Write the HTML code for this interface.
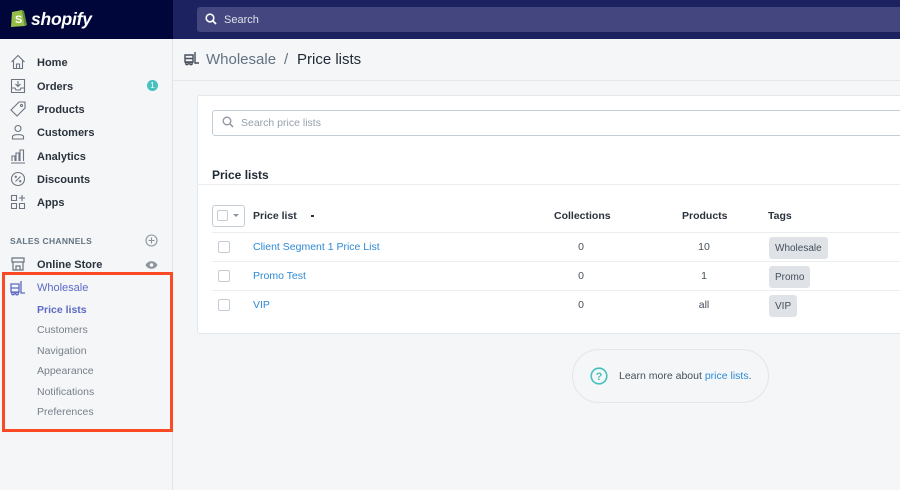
<!DOCTYPE html>
<html><head><meta charset="utf-8"><style>
*{box-sizing:border-box;margin:0;padding:0}
body{width:900px;height:490px;overflow:hidden;background:#f4f6f8;font-family:"Liberation Sans",sans-serif;position:relative;color:#212b36}
.top{position:absolute;left:0;top:0;width:900px;height:39px;background:#1c2260}
.logo{position:absolute;left:0;top:0;width:173px;height:39px;background:#000639}
.search{position:absolute;left:197px;top:7px;width:703px;height:25px;background:#43467f;border-radius:3px 0 0 3px;color:#dfe3e8;font-size:11px;line-height:26px;padding-left:27px}
.side{position:absolute;left:0;top:39px;width:173px;height:451px;border-right:1px solid #dfe3e8;background:#f4f6f8}
.nav{position:absolute;left:37px;font-size:11px;font-weight:bold;color:#2a333d}
.ic{position:absolute;left:10px;width:16px;height:16px}
.sub{position:absolute;left:37px;font-size:10.5px;color:#777f89}
.a{position:absolute}
.card{position:absolute;left:197px;top:95px;width:710px;height:239px;background:#fff;border:1px solid #e3e6ea;border-radius:3px}
.line{position:absolute;left:212px;width:688px;height:1px;background:#ebeef0}
.cb{position:absolute;left:218px;width:12px;height:12px;border:1px solid #c4cdd5;border-radius:2px;background:#fff}
.link{position:absolute;left:253px;font-size:10.5px;color:#2d8ad6}
.num{position:absolute;font-size:10.5px;color:#454f5b;text-align:center;width:40px}
.tag{position:absolute;left:769px;height:22px;background:#dfe3e8;border-radius:3px;font-size:10px;color:#454f5b;line-height:23px;padding:0 6px}
.th{position:absolute;top:210px;font-size:10.5px;font-weight:bold;color:#2a333d}
</style></head><body>
<div class="top"></div>
<div class="logo">
<svg class="a" style="left:10px;top:7px" width="17" height="21" viewBox="0 0 17 21"><path d="M2 5 L12 3 L15 19 L1 20 Z" fill="#95bf47"/><path d="M12 3 L15 19 L17 18 L14 4Z" fill="#5e8e3e"/><text x="5" y="16" font-size="11" font-weight="bold" fill="#fff" font-family="Liberation Sans">S</text></svg>
<div class="a" style="left:31px;top:9px;color:#fff;font-weight:bold;font-style:italic;font-size:17.5px;letter-spacing:-0.2px">shopify</div>
</div>
<div class="search"><svg class="a" style="left:8px;top:6px" width="12" height="12" viewBox="0 0 12 12"><circle cx="5" cy="5" r="3.8" fill="none" stroke="#fff" stroke-width="1.6"/><path d="M8 8 L11 11" stroke="#fff" stroke-width="1.8"/></svg>Search</div>

<div class="side">
<svg class="ic" style="top:15px" viewBox="0 0 16 16" fill="none" stroke="#6b7480" stroke-width="1.1"><path d="M1.5 8 L8 1.5 L14.5 8 M3.5 6.5 V14.5 H12.5 V6.5 M6.5 14.5 V10 H9.5 V14.5"/></svg>
<div class="nav" style="top:18px">Home</div>
<svg class="ic" style="top:39px" viewBox="0 0 16 16" fill="none" stroke="#6b7480" stroke-width="1.1"><path d="M1.5 1.5 H14.5 V14.5 H1.5Z M1.5 10 H5 L6 12 H10 L11 10 H14.5 M8 3 V8.5 M5.5 6 L8 8.5 L10.5 6"/></svg>
<div class="nav" style="top:42px">Orders</div>
<div class="a" style="left:147px;top:41px;width:11px;height:11px;border-radius:50%;background:#47c1bf;color:#fff;font-size:8px;text-align:center;line-height:11px">1</div>
<svg class="ic" style="top:62px" viewBox="0 0 16 16" fill="none" stroke="#6b7480" stroke-width="1.1"><path d="M1 9 L9 1 H15 V7 L7 15Z"/><circle cx="11.5" cy="4.5" r="1"/></svg>
<div class="nav" style="top:65px">Products</div>
<svg class="ic" style="top:85px" viewBox="0 0 16 16" fill="none" stroke="#6b7480" stroke-width="1.1"><circle cx="8" cy="4.5" r="3"/><path d="M2.5 15 V12.5 C2.5 10 13.5 10 13.5 12.5 V15Z"/></svg>
<div class="nav" style="top:88px">Customers</div>
<svg class="ic" style="top:109px" viewBox="0 0 16 16" fill="none" stroke="#6b7480" stroke-width="1.1"><path d="M1 15 H15 M2 13 V8 H5 V13 M6 13 V5 H9 V13 M10 13 V2 H13.5 V13"/></svg>
<div class="nav" style="top:112px">Analytics</div>
<svg class="ic" style="top:132px" viewBox="0 0 16 16" fill="none" stroke="#6b7480" stroke-width="1.1"><circle cx="8" cy="8" r="6.5"/><path d="M5.5 10.5 L10.5 5.5"/><circle cx="5.8" cy="5.8" r=".6"/><circle cx="10.2" cy="10.2" r=".6"/></svg>
<div class="nav" style="top:135px">Discounts</div>
<svg class="ic" style="top:155px" viewBox="0 0 16 16" fill="none" stroke="#6b7480" stroke-width="1.1"><path d="M1.5 1.5 H6.5 V6.5 H1.5Z M1.5 9.5 H6.5 V14.5 H1.5Z M9.5 9.5 H14.5 V14.5 H9.5Z M12 1 V7 M9 4 H15"/></svg>
<div class="nav" style="top:158px">Apps</div>
<div class="a" style="left:10px;top:197px;font-size:8.5px;font-weight:bold;color:#637381;letter-spacing:.3px">SALES CHANNELS</div>
<svg class="a" style="left:145px;top:195px" width="13" height="13" viewBox="0 0 13 13" fill="none" stroke="#8c949e" stroke-width="1.1"><circle cx="6.5" cy="6.5" r="5.5"/><path d="M6.5 3.5 V9.5 M3.5 6.5 H9.5"/></svg>
<svg class="ic" style="top:217px" viewBox="0 0 16 16" fill="none" stroke="#6b7480" stroke-width="1.2"><path d="M2 2 H14 V6 H2Z M3 6 V14 H13 V6 M6 14 V10 H10 V14"/></svg>
<div class="nav" style="top:220px">Online Store</div>
<svg class="a" style="left:145px;top:221px" width="13" height="10" viewBox="0 0 13 10"><path d="M.5 5 C3 0 10 0 12.5 5 C10 10 3 10 .5 5Z" fill="#8c949e"/><circle cx="6.5" cy="5" r="1.8" fill="#f4f6f8"/></svg>
<svg class="ic" style="top:241px" viewBox="0 0 16 16" fill="none" stroke="#5c6ac4" stroke-width="1.3"><path d="M1 4 H9 V12 H1Z M1 8 H9 M11 1 V13 H15"/><circle cx="3" cy="13.5" r="1.3"/><circle cx="7" cy="13.5" r="1.3"/></svg>
<div class="nav" style="top:243px;color:#5c6ac4;font-weight:normal">Wholesale</div>
<div class="sub" style="top:265px;color:#5c6ac4;font-weight:bold">Price lists</div>
<div class="sub" style="top:285px">Customers</div>
<div class="sub" style="top:306px">Navigation</div>
<div class="sub" style="top:326px">Appearance</div>
<div class="sub" style="top:347px">Notifications</div>
<div class="sub" style="top:367px">Preferences</div>
</div>
<div class="a" style="left:2px;top:272px;width:171px;height:160px;border:3px solid #fc4a25"></div>

<svg class="a" style="left:184px;top:52px" width="16" height="14" viewBox="0 0 16 14" fill="none" stroke="#454f5b" stroke-width="1.4"><path d="M1 3 H9 V10 H1Z M1 6.5 H9 M11 0 V11 H15"/><circle cx="3" cy="11.5" r="1.2"/><circle cx="7" cy="11.5" r="1.2"/></svg>
<div class="a" style="left:206px;top:51px;font-size:15px;color:#637381">Wholesale</div>
<div class="a" style="left:284px;top:51px;font-size:15px;color:#637381">/</div>
<div class="a" style="left:297px;top:51px;font-size:15px;color:#212b36">Price lists</div>
<div class="a" style="left:173px;top:80px;width:727px;height:1px;background:#e3e6ea"></div>

<div class="card"></div>
<div class="a" style="left:212px;top:110px;width:700px;height:26px;border:1px solid #c4cdd5;border-radius:3px;background:#fff"></div>
<svg class="a" style="left:222px;top:116px" width="12" height="12" viewBox="0 0 12 12"><circle cx="5" cy="5" r="3.8" fill="none" stroke="#8c949e" stroke-width="1.3"/><path d="M8 8 L11 11" stroke="#8c949e" stroke-width="1.5"/></svg>
<div class="a" style="left:241px;top:117px;font-size:10.5px;color:#95a0ab">Search price lists</div>
<div class="a" style="left:212px;top:168px;font-size:12px;font-weight:bold">Price lists</div>
<div class="a" style="left:197px;top:184px;width:703px;height:1px;background:#ebeef0"></div>
<div class="a" style="left:212px;top:205px;width:33px;height:22px;border:1px solid #c4cdd5;border-radius:3px;background:#fff"></div>
<div class="a" style="left:217px;top:210px;width:11px;height:11px;border:1px solid #c4cdd5;border-radius:2px"></div>
<div class="a" style="left:233px;top:214px;border:3px solid transparent;border-top:3px solid #8c949e"></div>
<div class="th" style="left:253px">Price list</div>
<div class="a" style="left:311px;top:215px;width:3px;height:1.5px;background:#333"></div>
<div class="th" style="left:554px">Collections</div>
<div class="th" style="left:682px">Products</div>
<div class="th" style="left:768px">Tags</div>
<div class="line" style="top:232px"></div>
<div class="line" style="top:261px"></div>
<div class="line" style="top:290px"></div>
<div class="cb" style="top:241px"></div><div class="link" style="top:241px">Client Segment 1 Price List</div>
<div class="num" style="left:561px;top:241px">0</div><div class="num" style="left:684px;top:241px">10</div><div class="tag" style="top:237px">Wholesale</div>
<div class="cb" style="top:270px"></div><div class="link" style="top:270px">Promo Test</div>
<div class="num" style="left:561px;top:270px">0</div><div class="num" style="left:684px;top:270px">1</div><div class="tag" style="top:266px">Promo</div>
<div class="cb" style="top:299px"></div><div class="link" style="top:299px">VIP</div>
<div class="num" style="left:561px;top:299px">0</div><div class="num" style="left:684px;top:299px">all</div><div class="tag" style="top:295px">VIP</div>

<div class="a" style="left:572px;top:349px;width:197px;height:54px;border:1px solid #e3e6ea;border-radius:27px"></div>
<svg class="a" style="left:590px;top:367px" width="18" height="18" viewBox="0 0 18 18"><circle cx="9" cy="9" r="7.8" fill="none" stroke="#47c1bf" stroke-width="1.6"/><text x="9" y="13" text-anchor="middle" font-size="11" font-weight="bold" fill="#47c1bf" font-family="Liberation Sans">?</text></svg>
<div class="a" style="left:619px;top:370px;font-size:10.5px;color:#454f5b">Learn more about <span style="color:#2d8ad6">price lists</span>.</div>
</body></html>
